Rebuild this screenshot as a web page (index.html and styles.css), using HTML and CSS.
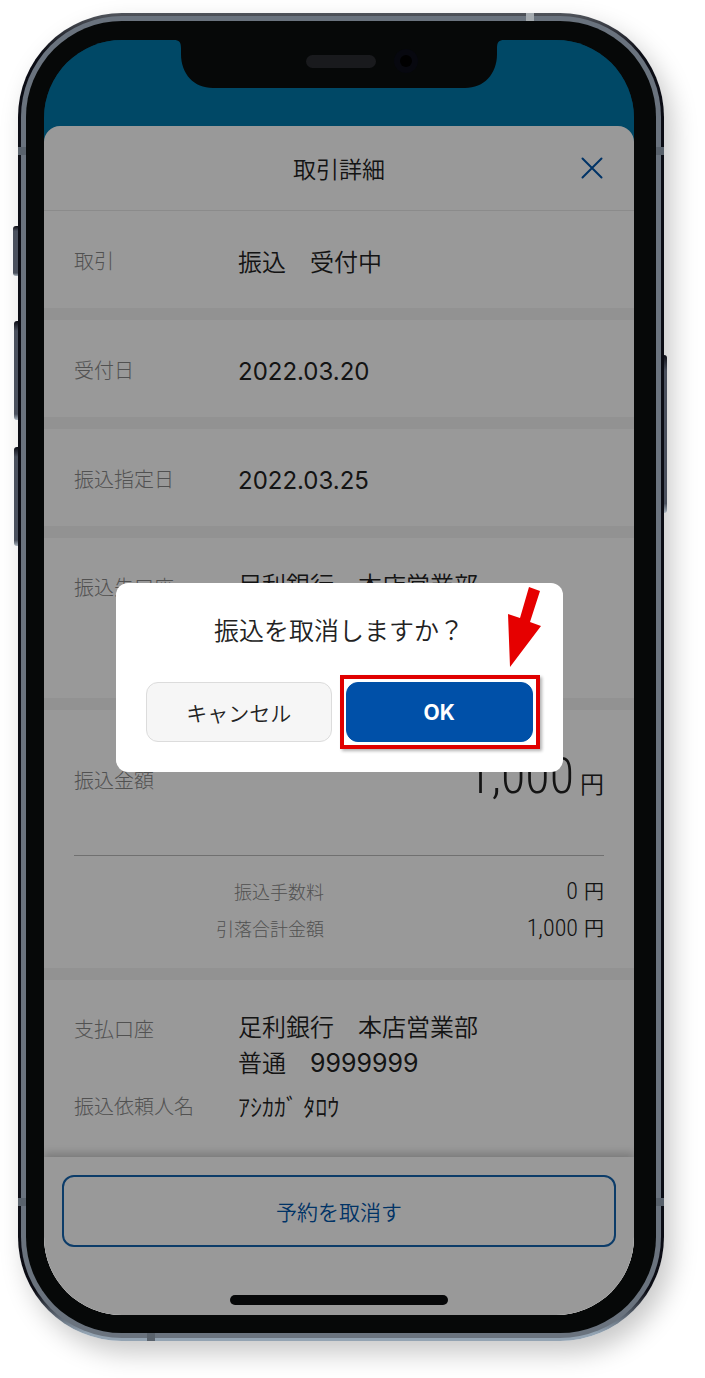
FILE: index.html
```html
<!DOCTYPE html>
<html lang="ja">
  <head>
    <title>取引詳細</title>

    <meta charset="utf-8" />
    <meta name="viewport" content="width=device-width, initial-scale=1" />

    <link rel="stylesheet" href="styles.css">
  </head>

  <body>
    <div class="phone">
      <span class="phone__key phone__key--mute"></span>
      <span class="phone__key phone__key--up"></span>
      <span class="phone__key phone__key--down"></span>
      <span class="phone__key phone__key--power"></span>
      <span class="phone__band phone__band--top"></span>
      <span class="phone__band phone__band--left"></span>
      <span class="phone__band phone__band--right"></span>
      <span class="phone__band phone__band--left phone__band--low"></span>
      <span class="phone__band phone__band--right phone__band--low"></span>
      <span class="phone__band phone__band--bottom"></span>

      <div class="phone__bezel">
        <div class="screen">
          <svg class="screen__notch" width="330" height="48" viewBox="0 0 330 48" aria-hidden="true">
            <path d="M0 0H330C325 0 323 2 323 8V14C323 34 310 48 291 48H39C20 48 7 34 7 14V8C7 2 5 0 0 0Z" fill="#060808" />
            <rect x="132" y="15" width="70" height="13" rx="6.5" fill="#191a1d" />
            <circle cx="232" cy="21" r="12" fill="#07080f" />
            <circle cx="232" cy="21" r="6" fill="#000" />
          </svg>

          <main class="sheet">
            <header class="sheet__header">
              <h1 class="sheet__title">取引詳細</h1>
              <button type="button" class="sheet__close" aria-label="閉じる">
                <svg width="22" height="22" viewBox="0 0 22 22" aria-hidden="true">
                  <path d="M1.500 1.500L20.500 20.500M20.500 1.500L1.500 20.500" stroke="#0055aa" stroke-width="2" stroke-linecap="round" />
                </svg>
              </button>
            </header>

            <dl class="section">
              <div class="row">
                <dt>取引</dt>
                <dd>振込　受付中</dd>
              </div>
            </dl>

            <dl class="section">
              <div class="row">
                <dt>受付日</dt>
                <dd><span class="number">2022.03.20</span></dd>
              </div>
            </dl>

            <dl class="section">
              <div class="row">
                <dt>振込指定日</dt>
                <dd><span class="number">2022.03.25</span></dd>
              </div>
            </dl>

            <dl class="section section--account section--payee">
              <div class="row">
                <dt>振込先口座</dt>
                <dd>足利銀行　本店営業部</dd>
              </div>
            </dl>

            <dl class="section section--amount">
              <div class="amount">
                <dt>振込金額</dt>
                <dd><span class="amount__number">1,000</span>円</dd>
              </div>
              <div class="fee">
                <dt>振込手数料</dt>
                <dd><span class="fee__number">0</span>円</dd>
              </div>
              <div class="fee">
                <dt>引落合計金額</dt>
                <dd><span class="fee__number">1,000</span>円</dd>
              </div>
            </dl>

            <dl class="section section--account">
              <div class="row">
                <dt>支払口座</dt>
                <dd>足利銀行　本店営業部<br />普通　<span class="number number--account">9999999</span></dd>
              </div>
              <div class="row">
                <dt>振込依頼人名</dt>
                <dd>ｱｼｶｶﾞ ﾀﾛｳ</dd>
              </div>
            </dl>

            <footer class="sheet__footer">
              <button type="button" class="sheet__revoke">予約を取消す</button>
            </footer>
          </main>

          <div class="overlay">
            <div class="dialog" role="dialog" aria-labelledby="dialog-title">
              <h2 class="dialog__title" id="dialog-title">振込を取消しますか？</h2>
              <div class="dialog__buttons">
                <button type="button" class="dialog__button">キャンセル</button>
                <div class="dialog__target">
                  <button type="button" class="dialog__button dialog__button--ok">OK</button>
                  <svg class="dialog__arrow" width="36" height="80" viewBox="0 0 36 80" aria-hidden="true">
                    <path d="M22 0L33 4L23 35L34 39L3 80L1 27L13 31Z" fill="#e60000" />
                  </svg>
                </div>
              </div>
            </div>
          </div>

          <span class="screen__home"></span>
        </div>
      </div>
    </div>
  </body>
</html>
```

FILE: styles.css
```css
* {
  box-sizing: border-box;
}

body {
  margin: 0;
  padding: 13px 41px 37px 18px;
  background: #fff;
  color: #222;
  font-family: "Noto Sans CJK JP", sans-serif;
  font-size: 24px;
  font-weight: 350;
  line-height: 36px;
}

h1, h2, dl, dd {
  margin: 0;
  font-weight: inherit;
}

button {
  padding: 0;
  font-family: inherit;
  font-weight: inherit;
  cursor: pointer;
}

/* phone body */

.phone {
  position: relative;
  padding: 5px;
  border: 3px solid transparent;
  border-radius: 104px;
  background:
    linear-gradient(#6a737e, #6a737e) padding-box,
    linear-gradient(#50545b, #0b0c14 40px, #0b0c14 calc(100% - 50px), #93a3b2 calc(100% - 8px)) border-box;
  box-shadow: 8px 12px 26px rgba(0, 0, 0, .22);
}

.phone__bezel {
  padding: 19px 22px 18px 18px;
  border-radius: 96px;
  background: #060808;
}

.phone__key {
  position: absolute;
  left: -7px;
  width: 4px;
  height: 99px;
  border-radius: 3px 0 0 3px;
  background: linear-gradient(#0b0c14, #4b515e 10%, #4b515e 94%, #a9b4be);
}

.phone__key--mute {
  left: -8px;
  top: 210px;
  width: 5px;
  height: 50px;
}

.phone__key--up {
  top: 305px;
}

.phone__key--down {
  top: 431px;
}

.phone__key--power {
  top: 339px;
  left: auto;
  right: -6px;
  width: 3px;
  height: 158px;
  border-radius: 0 3px 3px 0;
}

.phone__band {
  position: absolute;
  width: 8px;
  height: 8px;
  background: #59626c;
}

.phone__band--top {
  top: -3px;
  right: 127px;
  background: #a5abb0;
}

.phone__band--left {
  top: 131px;
  left: -3px;
}

.phone__band--right {
  top: 131px;
  right: -3px;
}

.phone__band--low {
  top: auto;
  bottom: 132px;
}

.phone__band--bottom {
  bottom: -3px;
  left: 126px;
}

.screen {
  position: relative;
  overflow: hidden;
  padding-top: 86px;
  border-radius: 78px;
  background: linear-gradient(#0078aa 160px, #fff 160px);
}

.screen__notch {
  position: absolute;
  z-index: 2;
  top: 0;
  left: 50%;
  transform: translateX(-50%);
}

.screen__home {
  position: absolute;
  z-index: 2;
  bottom: 10px;
  left: 50%;
  width: 218px;
  height: 10px;
  border-radius: 5px;
  background: #060708;
  transform: translateX(-50%);
}

/* transaction details */

.sheet {
  border-radius: 16px 16px 0 0;
  background: #fff;
}

.sheet__header {
  display: grid;
  grid-template-columns: 22px 1fr 22px;
  align-items: center;
  height: 85px;
  padding: 0 31px;
  border-bottom: 1px solid #e8e8e8;
}

.sheet__title {
  grid-column: 2;
  font-size: 23px;
  text-align: center;
}

.sheet__close {
  height: 22px;
  border: 0;
  background: none;
  line-height: 0;
}

.section {
  padding: 32px 30px 29px;
}

.section + .section {
  border-top: 12px solid #f3f3f3;
}

.row {
  display: grid;
  grid-template-columns: 164px 1fr;
}

.row + .row {
  padding-top: 8px;
}

dt {
  color: #888;
  font-size: 20px;
  font-weight: 300;
}

.number {
  font-family: Inter, sans-serif;
  font-weight: 400;
  line-height: 1;
}

.number--account {
  font-size: 25px;
}

.section--account {
  padding: 28px 30px 33px;
}

.section--account .row:first-child dt {
  padding-top: 3px;
}

.section--payee {
  min-height: 172px;
}

.section--amount {
  padding: 30px 30px 22px;
}

.amount {
  display: flex;
  align-items: center;
  justify-content: space-between;
  height: 116px;
  margin-bottom: 17px;
  padding-bottom: 36px;
  border-bottom: 1px solid #bbb;
}

.amount__number {
  margin-right: 6px;
  font-family: "Roboto Condensed", "Liberation Sans Narrow", Roboto, sans-serif;
  font-size: 50px;
  font-weight: 300;
}

.fee {
  display: grid;
  grid-template-columns: 250px 1fr;
  text-align: right;
}

.fee + .fee {
  padding-top: 1px;
}

.fee dt {
  font-size: 18px;
}

.fee dd {
  font-size: 20px;
}

.fee__number {
  margin-right: 6px;
  font-family: "Roboto Condensed", "Liberation Sans Narrow", Roboto, sans-serif;
  font-size: 24px;
  font-weight: 300;
}

.sheet__footer {
  padding: 18px 18px 68px;
  box-shadow: 0 -4px 8px rgba(0, 0, 0, .2);
}

.sheet__revoke {
  width: 100%;
  height: 72px;
  border: 2px solid #1464b0;
  border-radius: 12px;
  background: #fff;
  color: #0055aa;
  font-size: 21px;
}

/* confirmation */

.overlay {
  position: absolute;
  top: 0;
  right: 0;
  bottom: 0;
  left: 0;
  display: flex;
  align-items: center;
  justify-content: center;
  background: rgba(0, 0, 0, .4);
}

.dialog {
  width: 447px;
  padding: 28px 30px 30px;
  border-radius: 12px;
  background: #fff;
}

.dialog__title {
  margin-bottom: 35px;
  font-size: 25px;
  text-align: center;
}

.dialog__buttons {
  display: grid;
  grid-template-columns: 1fr 1fr;
  gap: 14px;
}

.dialog__button {
  width: 100%;
  height: 60px;
  border: 1px solid #dcdcdc;
  border-radius: 12px;
  background: #f6f6f6;
  color: #222;
  font-size: 21px;
}

.dialog__button--ok {
  border-color: #0050a8;
  background: #0050a8;
  color: #fff;
  font-family: Inter, sans-serif;
  font-weight: 700;
}

.dialog__target {
  position: relative;
}

.dialog__target::after {
  content: "";
  position: absolute;
  top: -7px;
  right: -7px;
  bottom: -7px;
  left: -6px;
  border: 4px solid #e00000;
  box-shadow: 2px 2px 3px rgba(0, 0, 0, .3);
  pointer-events: none;
}

.dialog__arrow {
  position: absolute;
  right: -10px;
  bottom: 75px;
}
```
